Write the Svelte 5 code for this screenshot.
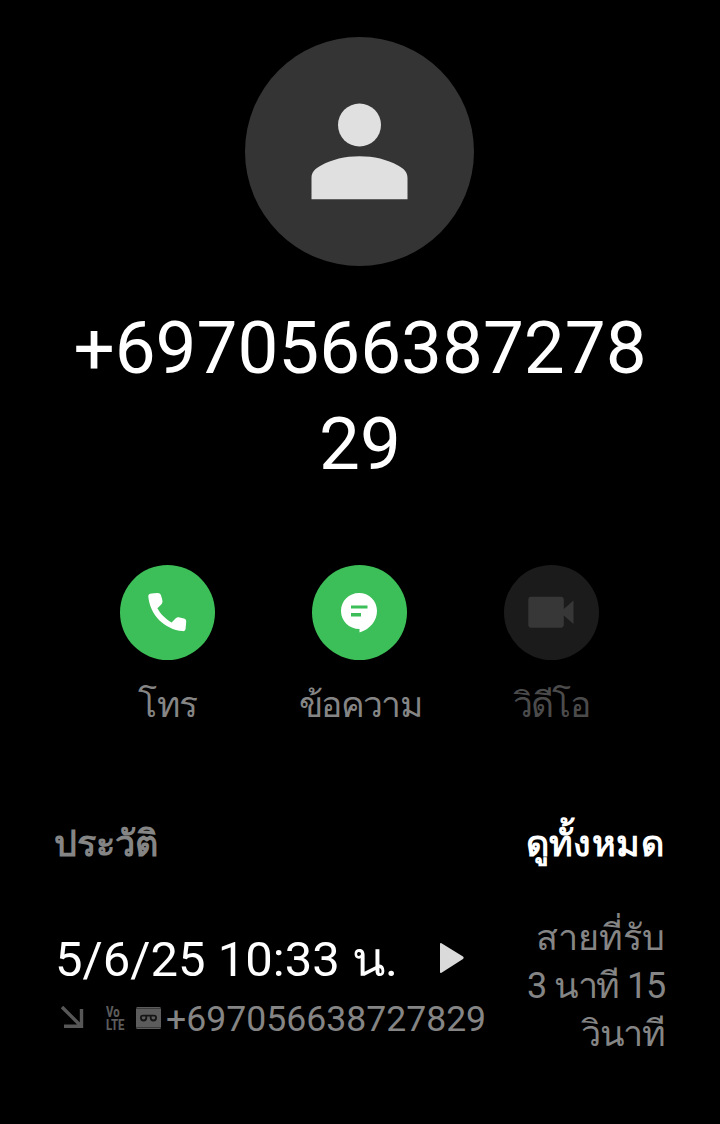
<script lang="ts">
  interface Action {
    id: string;
    label: string;
    disabled?: boolean;
  }

  const number = '+697056638727829';
  const actions: Action[] = [
    { id: 'call', label: 'โทร' },
    { id: 'message', label: 'ข้อความ' },
    { id: 'video', label: 'วิดีโอ', disabled: true },
  ];
  const duration = ['สายที่รับ', '3 นาที 15', 'วินาที'];
</script>

<main class="contact">
  <svg class="avatar" viewBox="0 0 230 230">
    <circle cx="114.5" cy="114.5" r="114.5" fill="#343434" />
    <circle cx="114.5" cy="88" r="21.5" fill="#e0e0e0" />
    <path fill="#e0e0e0" d="M66.5 162.3V141C66.5 135 70 131.5 76 128.5C87 122.5 100 119.3 114.5 119.3S142 122.5 153 128.5C159 131.5 162.5 135 162.5 141V162.3Z" />
  </svg>

  <h1 class="number">{number}</h1>

  <div class="actions">
    {#each actions as action (action.id)}
      <button class={'action ' + action.id} disabled={action.disabled}>
        <svg class="disc" viewBox="0 0 96 96">
          <circle class="disc-bg" cx="47.5" cy="47.5" r="47.5" />
          {#if action.id === 'call'}
            <path fill="#fff" d="M28.3 31.5C28.3 29.5 29.5 28.7 31.5 28.6L37 28C39 27.8 40.3 28.4 41 30.2L42.3 35C42.8 37 42.3 38.4 41 39.7L37.4 43.2C40.3 48.8 46 54.4 51.6 57.4L55.3 53.8C56.6 52.5 57.8 52 59.6 52.5L64 53.6C65.7 54.1 66.4 55.2 66.2 57L65.6 63.5C65.4 65.4 64.5 66.3 62.6 66.1C44.5 64.5 30 50 28.3 31.5Z" />
          {:else if action.id === 'message'}
            <path fill="#fff" d="M47 28C57.2 28 65 35.8 65 45.8C65 56 58 64.3 47.5 67.5V64C37 64 29 56 29 46C29 35.8 37 28 47 28Z" />
            <path fill="#3cbf58" d="M39 40.4H55.5V43.6H39ZM39 48.1H49V51.4H39Z" />
          {:else}
            <path fill="#373737" d="M27 31.8H57C58.7 31.8 59.8 33 59.8 34.6V44L69.5 35.5V59L59.8 50.5V59.5C59.8 61.5 58.7 62.7 57 62.7H27C25.3 62.7 24.3 61.5 24.3 59.8V34.6C24.3 33 25.3 31.8 27 31.8Z" />
          {/if}
        </svg>
        <span class="label">{action.label}</span>
      </button>
    {/each}
  </div>

  <div class="history-head">
    <span class="title">ประวัติ</span>
    <span class="all">ดูทั้งหมด</span>
  </div>

  <div class="entry">
    <div class="info">
      <div class="when">
        <span>5/6/25 10:33 น.</span>
        <svg class="play" viewBox="0 0 26 32">
          <path fill="#dadada" d="M1 2Q1 .5 2.5 1.2L24 14.5Q25.5 15.8 24 17L2.5 30.8Q1 31.5 1 30Z" />
        </svg>
      </div>
      <div class="meta">
        <svg class="incoming" viewBox="0 0 24 24">
          <path fill="none" stroke="#575757" stroke-width="3.4" d="M1 1L20 20M20.5 3V20.3H3" />
        </svg>
        <div class="volte">
          <span>Vo</span>
          <span>LTE</span>
        </div>
        <svg class="tape" viewBox="0 0 25 22">
          <rect width="25" height="22" rx="1.5" fill="#5c5c5c" />
          <path stroke="#111" stroke-width="1" opacity=".45" d="M0 1.5H25M0 20.5H25" />
          <path fill="none" stroke="#161616" stroke-width="1.8" d="M6.5 8.7H18.500M10.300 8.700V10.800A2.700 2.700 0 0 1 4.900 10.800Q4.900 8.700 6.800 8.700M14.700 8.700V10.800A2.700 2.700 0 0 0 20.100 10.800Q20.100 8.700 18.200 8.700" />
        </svg>
        <span>{number}</span>
      </div>
    </div>
    <div class="duration">
      {#each duration as line, i}
        <div class:tight={i > 0}>{line}</div>
      {/each}
    </div>
  </div>
</main>

<style>
  :global(body) {
    background: #000;
  }

  .contact {
    box-sizing: border-box;
    height: 1124px;
    padding-top: 37px;
    overflow: hidden;
    background: #000;
    color: #fff;
    font-family: Roboto, sans-serif;
  }

  .avatar {
    display: block;
    width: 230px;
    height: 230px;
    margin: 0 auto;
  }

  .number {
    width: 580px;
    margin: 33px auto 0;
    font-size: 72.8px;
    font-weight: 400;
    line-height: 96px;
    text-align: center;
    word-break: break-all;
  }

  .actions {
    display: grid;
    grid-template-columns: repeat(3, 192px);
    justify-content: center;
    margin-top: 73px;
  }

  .action {
    display: flex;
    flex-direction: column;
    align-items: center;
    padding: 0;
    border: 0;
    background: none;
    color: #858585;
    font: inherit;
  }

  .disc {
    width: 96px;
    height: 96px;
  }

  .disc-bg {
    fill: #3cbf58;
  }

  .action:disabled {
    color: #4b4b4b;
  }

  .action:disabled .disc-bg {
    fill: #1b1b1b;
  }

  .label {
    height: 48px;
    margin-top: 20px;
    font-size: 35.5px;
    line-height: 48px;
    letter-spacing: -1.6px;
  }

  .call .label {
    letter-spacing: -0.3px;
  }

  .video .label {
    padding-right: 2px;
  }

  .history-head {
    display: flex;
    justify-content: space-between;
    height: 48px;
    padding: 0 56px 0 54px;
    margin-top: 91px;
    font-size: 36px;
    font-weight: 700;
    line-height: 48px;
  }

  .title {
    color: #858585;
  }

  .all {
    letter-spacing: 0.4px;
  }

  .entry {
    display: flex;
    justify-content: space-between;
    padding: 0 55px;
    margin-top: 46px;
  }

  .info {
    padding-top: 16px;
  }

  .when {
    display: flex;
    align-items: center;
    height: 60px;
    font-size: 49px;
    line-height: 60px;
    white-space: nowrap;
  }

  .play {
    width: 26px;
    height: 32px;
    margin: 0 0 5px 41px;
  }

  .meta {
    display: flex;
    align-items: center;
    height: 48px;
    padding-left: 6px;
    margin-top: 5px;
    color: #858585;
    font-size: 35.6px;
    line-height: 48px;
  }

  .incoming {
    width: 24px;
    height: 24px;
    margin-bottom: 2px;
  }

  .volte {
    display: flex;
    flex-direction: column;
    width: 20px;
    margin-left: 21px;
    color: #5c5c5c;
    font-size: 15px;
    font-weight: 800;
    line-height: 13px;
  }

  .volte span {
    transform: scaleX(0.76);
    transform-origin: left;
  }

  .tape {
    width: 25px;
    height: 22px;
    margin: 0 5px 2px 10px;
  }

  .duration {
    color: #858585;
    font-size: 36px;
    line-height: 48px;
    text-align: right;
    white-space: nowrap;
  }

  .tight {
    letter-spacing: -1.2px;
  }
</style>
